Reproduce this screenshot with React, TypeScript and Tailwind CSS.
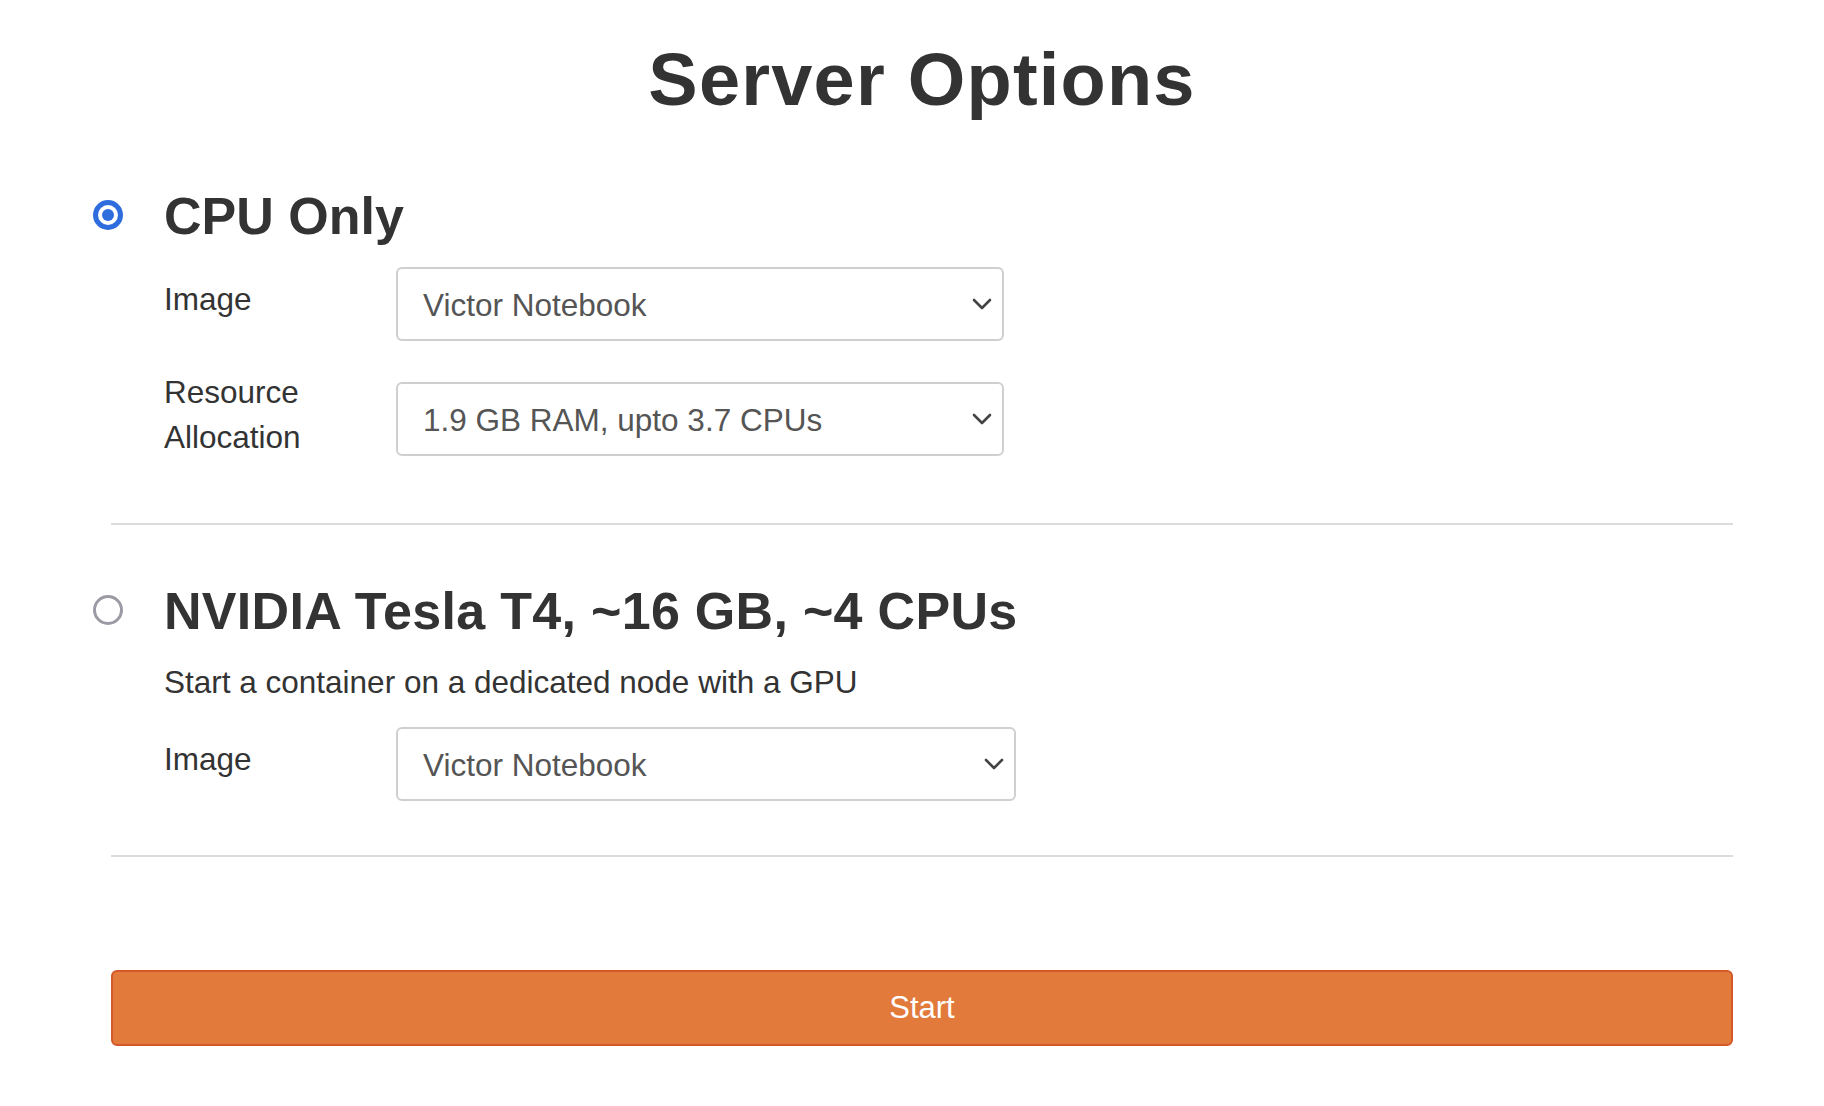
import React from "react";

const Radio: React.FC<{ checked?: boolean }> = ({ checked }) => {
  if (checked) {
    return (
      <div className="mb-1 flex h-[30px] w-[30px] shrink-0 items-center justify-center rounded-full border-[5px] border-[#2f6ddf] bg-white">
        <div className="h-[12px] w-[12px] rounded-full bg-[#2f6ddf]"></div>
      </div>
    );
  }
  return (
    <div className="mb-0.5 h-[30px] w-[30px] shrink-0 rounded-full border-[3px] border-[#9c9aa4] bg-white"></div>
  );
};

const Select: React.FC<{ value: string; wide?: boolean }> = ({ value, wide }) => {
  return (
    <div
      className={
        (wide ? "w-[620px] " : "w-[608px] ") +
        "flex h-[74px] shrink-0 items-center justify-between rounded-[6px] border-2 border-[#cfcfcf] bg-white pl-[25px] pr-[10px] text-[31.5px] text-[#555555]"
      }
    >
      <span className="pt-[4px]">{value}</span>
      <svg width="20" height="12" viewBox="0 0 20 12" fill="none">
        <polyline
          points="2,2 10,10 18,2"
          stroke="#444444"
          strokeWidth="2.6"
          strokeLinecap="round"
          strokeLinejoin="round"
        />
      </svg>
    </div>
  );
};

const Row: React.FC<{ label: React.ReactNode; value: string; wide?: boolean }> = ({
  label,
  value,
  wide,
}) => {
  return (
    <div className="flex items-center">
      <div className="mb-2 w-[232px] shrink-0 text-[31.5px] leading-[45px] text-[#333333]">
        {label}
      </div>
      <Select value={value} wide={wide} />
    </div>
  );
};

const App: React.FC = () => {
  return (
    <div className="min-h-screen bg-white font-['Liberation_Sans',Arial,sans-serif] text-[#333333]">
      <div className="ml-[111px] w-[1622px] pt-[39px]">
        <h1 className="text-center text-[74px] font-bold leading-[1.1] tracking-[1.2px]">
          Server Options
        </h1>

        <section className="mt-[68px]">
          <div className="-ml-[18px] flex items-center gap-[41px]">
            <Radio checked />
            <h2 className="text-[52px] font-bold leading-[1.1]">CPU Only</h2>
          </div>
          <div className="ml-[53px] mt-[21px] flex flex-col gap-[29px]">
            <Row label="Image" value="Victor Notebook" />
            <Row
              label={
                <>
                  Resource
                  <br />
                  Allocation
                </>
              }
              value="1.9 GB RAM, upto 3.7 CPUs"
            />
          </div>
        </section>

        <hr className="mt-[55px] border-0 border-t-2 border-[#dcdcdc]" />

        <section className="mt-[58px]">
          <div className="-ml-[18px] flex items-center gap-[41px]">
            <Radio />
            <h2 className="text-[52px] font-bold leading-[1.1] tracking-[0.3px]">
              NVIDIA Tesla T4, ~16 GB, ~4 CPUs
            </h2>
          </div>
          <div className="ml-[53px]">
            <p className="mt-[20px] text-[31.5px] leading-[45px]">
              Start a container on a dedicated node with a GPU
            </p>
            <div className="mt-[22px]">
              <Row label="Image" value="Victor Notebook" wide />
            </div>
          </div>
        </section>

        <hr className="mt-[54px] border-0 border-t-2 border-[#dcdcdc]" />

        <button className="mt-[113px] flex h-[76px] w-full items-center justify-center rounded-[6px] border-2 border-[#d4592a] bg-[#e27a3b] text-[31px] text-white">
          Start
        </button>
      </div>
    </div>
  );
};

export default App;
